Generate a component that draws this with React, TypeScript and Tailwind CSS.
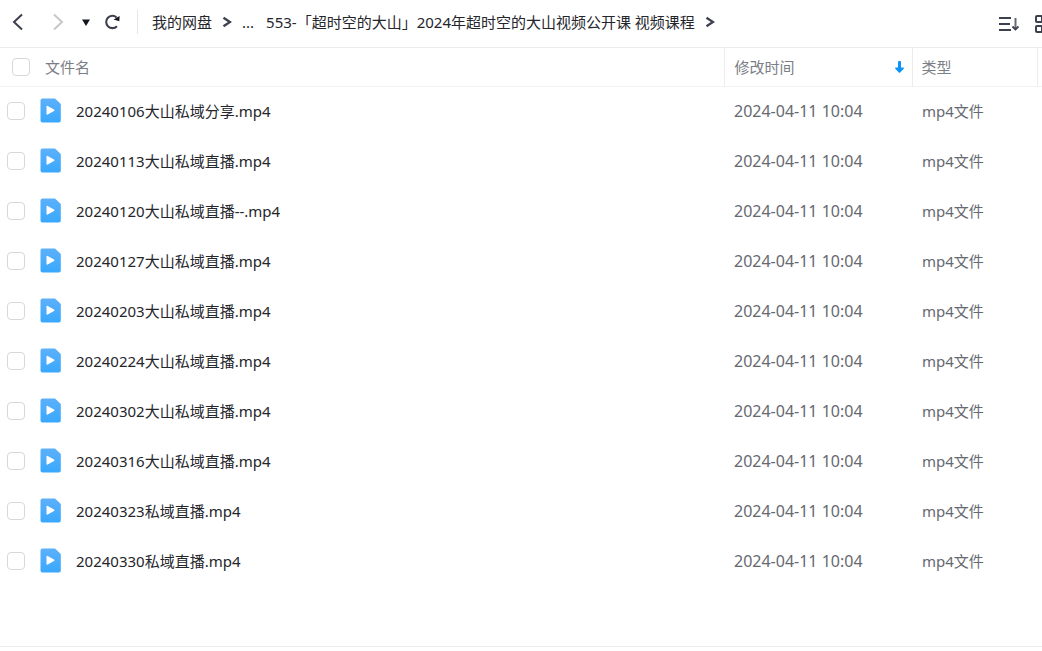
import React, { useState } from "react";

interface FileItem {
	name: string;
	modified: string;
	type: string;
}

const MODIFIED = "2024-04-11 10:04";

const files: FileItem[] = [
	"20240106大山私域分享.mp4",
	"20240113大山私域直播.mp4",
	"20240120大山私域直播--.mp4",
	"20240127大山私域直播.mp4",
	"20240203大山私域直播.mp4",
	"20240224大山私域直播.mp4",
	"20240302大山私域直播.mp4",
	"20240316大山私域直播.mp4",
	"20240323私域直播.mp4",
	"20240330私域直播.mp4",
].map((name) => ({ name, modified: MODIFIED, type: "mp4文件" }));

const ChevronIcon: React.FC<{ direction: "left" | "right" }> = ({
	direction,
}) => (
	<svg width="12" height="18" viewBox="0 0 12 18" fill="none" aria-hidden="true">
		<path
			d={direction === "left" ? "M10 1.5 2 9l8 7.5" : "M2 1.5 10 9l-8 7.5"}
			stroke="currentColor"
			strokeWidth="2"
		/>
	</svg>
);

const CrumbArrow: React.FC = () => (
	<svg
		width="10"
		height="12"
		viewBox="0 0 10 12"
		fill="none"
		aria-hidden="true"
		className="shrink-0 text-[#3c3f4d]"
	>
		<path d="M1.5 1.8 8 6l-6.5 4.2" stroke="currentColor" strokeWidth="2.3" />
	</svg>
);

const RefreshIcon: React.FC = () => (
	<svg width="18" height="16" viewBox="0 0 18 16" fill="none" aria-hidden="true">
		<path
			d="M12.9 12.2A6.2 6.2 0 1 1 12.6 3.4"
			stroke="currentColor"
			strokeWidth="2.1"
		/>
		<path d="M9.6 5.4 15.6 2l-.3 5.2z" fill="#14161f" />
	</svg>
);

const SortIcon: React.FC = () => (
	<svg width="21" height="16" viewBox="0 0 21 16" fill="none" aria-hidden="true">
		<path d="M1 2h12M1 8h11M1 14h12" stroke="currentColor" strokeWidth="2" />
		<path d="M17.5 2v11" stroke="#666a75" strokeWidth="2" />
		<path
			d="m14.5 10.5 3 3 3-3"
			stroke="currentColor"
			strokeWidth="1.8"
		/>
	</svg>
);

const GridIcon: React.FC = () => (
	<svg width="18" height="18" viewBox="0 0 18 18" fill="none" aria-hidden="true">
		<g stroke="currentColor" strokeWidth="2">
			<rect x="1" y="1" width="6" height="6" rx="1" />
			<rect x="11" y="1" width="6" height="6" rx="1" />
			<rect x="1" y="11" width="6" height="6" rx="1" />
			<rect x="11" y="11" width="6" height="6" rx="1" />
		</g>
	</svg>
);

const VideoFileIcon: React.FC = () => (
	<svg
		width="21"
		height="27"
		viewBox="0 0 21 27"
		aria-hidden="true"
		className="shrink-0"
	>
		<defs>
			<linearGradient id="video-file" x1="0" y1="0" x2="0" y2="1">
				<stop offset="0" stopColor="#5db0fa" />
				<stop offset="1" stopColor="#38a8fe" />
			</linearGradient>
		</defs>
		<path
			d="M2.5.5h12.500L20.800 6v16.500a2 2 0 0 1-2 2H2.500a2 2 0 0 1-2-2v-20a2 2 0 0 1 2-2z"
			fill="url(#video-file)"
		/>
		<path
			d="M6.500 8.600c0-.6.6-1 1.200-.7l6.300 3.700c.5.3.5 1 0 1.300l-6.300 3.700c-.6.3-1.200-.1-1.200-.7z"
			fill="#fff"
		/>
	</svg>
);

const Checkbox: React.FC<{
	id: string;
	label: string;
	checked: boolean;
	onChange: () => void;
}> = ({ id, label, checked, onChange }) => (
	<input
		id={id}
		type="checkbox"
		aria-label={label}
		checked={checked}
		onChange={onChange}
		className="size-[18px] shrink-0 appearance-none rounded-[4px] border border-[#d5d8dc] bg-white checked:border-[#06a7ff] checked:bg-[#06a7ff]"
	/>
);

const Toolbar: React.FC = () => (
	<header className="flex h-12 items-center overflow-hidden border-b border-[#ececee] pb-[3px] pl-3 text-[#3c3f4d]">
		<button type="button" aria-label="后退" className="shrink-0">
			<ChevronIcon direction="left" />
		</button>
		<button
			type="button"
			aria-label="前进"
			className="ml-7 shrink-0 text-[#c6c7ca]"
		>
			<ChevronIcon direction="right" />
		</button>
		<button type="button" aria-label="历史记录" className="ml-[18px] shrink-0">
			<svg width="8" height="7" viewBox="0 0 8 7" aria-hidden="true">
				<path d="M0 .5h8L4 7z" fill="#14161f" />
			</svg>
		</button>
		<button type="button" aria-label="刷新" className="ml-[14px] shrink-0">
			<RefreshIcon />
		</button>
		<nav
			aria-label="路径"
			className="ml-[15px] flex h-6 min-w-0 flex-1 items-center border-l border-[#e6e7e9] pl-[14px] whitespace-nowrap text-[#25262b]"
		>
			<a href="#root">我的网盘</a>
			<span className="mx-[10px]">
				<CrumbArrow />
			</span>
			<a href="#parent">...</a>
			<a href="#current" className="mr-[10px] ml-3 truncate">
				553-「超时空的大山」2024年超时空的大山视频公开课 视频课程
			</a>
			<CrumbArrow />
		</nav>
		<div className="-mr-[11px] flex shrink-0 items-center gap-4 pt-1">
			<button type="button" aria-label="排序">
				<SortIcon />
			</button>
			<button type="button" aria-label="网格视图">
				<GridIcon />
			</button>
		</div>
	</header>
);

export default function App() {
	const [selected, setSelected] = useState<string[]>([]);
	const allSelected = selected.length === files.length;

	const toggle = (name: string) => {
		setSelected((prev) =>
			prev.includes(name) ? prev.filter((n) => n !== name) : [...prev, name],
		);
	};

	return (
		<div className="flex min-h-screen flex-col bg-white font-['Noto_Sans','Noto_Sans_CJK_SC',sans-serif] text-[15px] leading-6">
			<Toolbar />
			<main className="flex-1">
				<table className="w-full table-fixed border-collapse text-left">
					<thead className="text-[#7b7e86]">
						<tr className="h-[38px] border-b border-[#f3f3f5]">
							<th className="p-0 font-normal">
								<div className="flex items-center gap-[15px] pl-3">
									<Checkbox
										id="select-all"
										label="全选"
										checked={allSelected}
										onChange={() =>
											setSelected(allSelected ? [] : files.map((f) => f.name))
										}
									/>
									<span>文件名</span>
								</div>
							</th>
							<th className="w-[188px] border-l border-[#ececee] p-0 font-normal">
								<button
									type="button"
									className="flex w-full items-center justify-between pr-2 pl-[10px]"
								>
									修改时间
									<svg
										width="9"
										height="12"
										viewBox="0 0 9 12"
										aria-hidden="true"
									>
										<path
											d="M3 1a1 1 0 0 1 1-1h1a1 1 0 0 1 1 1v5.500h2.200c.8 0 1 .7.5 1.200L5.200 11.500a1 1 0 0 1-1.400 0L.3 7.700C-.2 7.200 0 6.500.8 6.500H3z"
											fill="#0a95fb"
										/>
									</svg>
								</button>
							</th>
							<th className="w-[125px] border-x border-[#ececee] p-0 pl-[9px] font-normal">
								类型
							</th>
							<td className="w-[5px] p-0" />
						</tr>
					</thead>
					<tbody className="text-[#666970]">
						{files.map((file, index) => (
							<tr key={file.name} className="h-[50px] hover:bg-[#f5f9ff]">
								<td className="p-0">
									<div className="flex items-center pl-[7px]">
										<Checkbox
											id={`file-${index}`}
											label={file.name}
											checked={selected.includes(file.name)}
											onChange={() => toggle(file.name)}
										/>
										<label
											htmlFor={`file-${index}`}
											className="ml-[15px] flex min-w-0 items-center gap-[15px] text-[#25262b]"
										>
											<VideoFileIcon />
											<span className="truncate">{file.name}</span>
										</label>
									</div>
								</td>
								<td className="p-0 pl-[10px] text-base">{file.modified}</td>
								<td className="p-0 pl-[10px]">{file.type}</td>
								<td className="p-0" />
							</tr>
						))}
					</tbody>
				</table>
			</main>
			<footer className="h-[5px] border-t border-[#ececee]" />
		</div>
	);
}
